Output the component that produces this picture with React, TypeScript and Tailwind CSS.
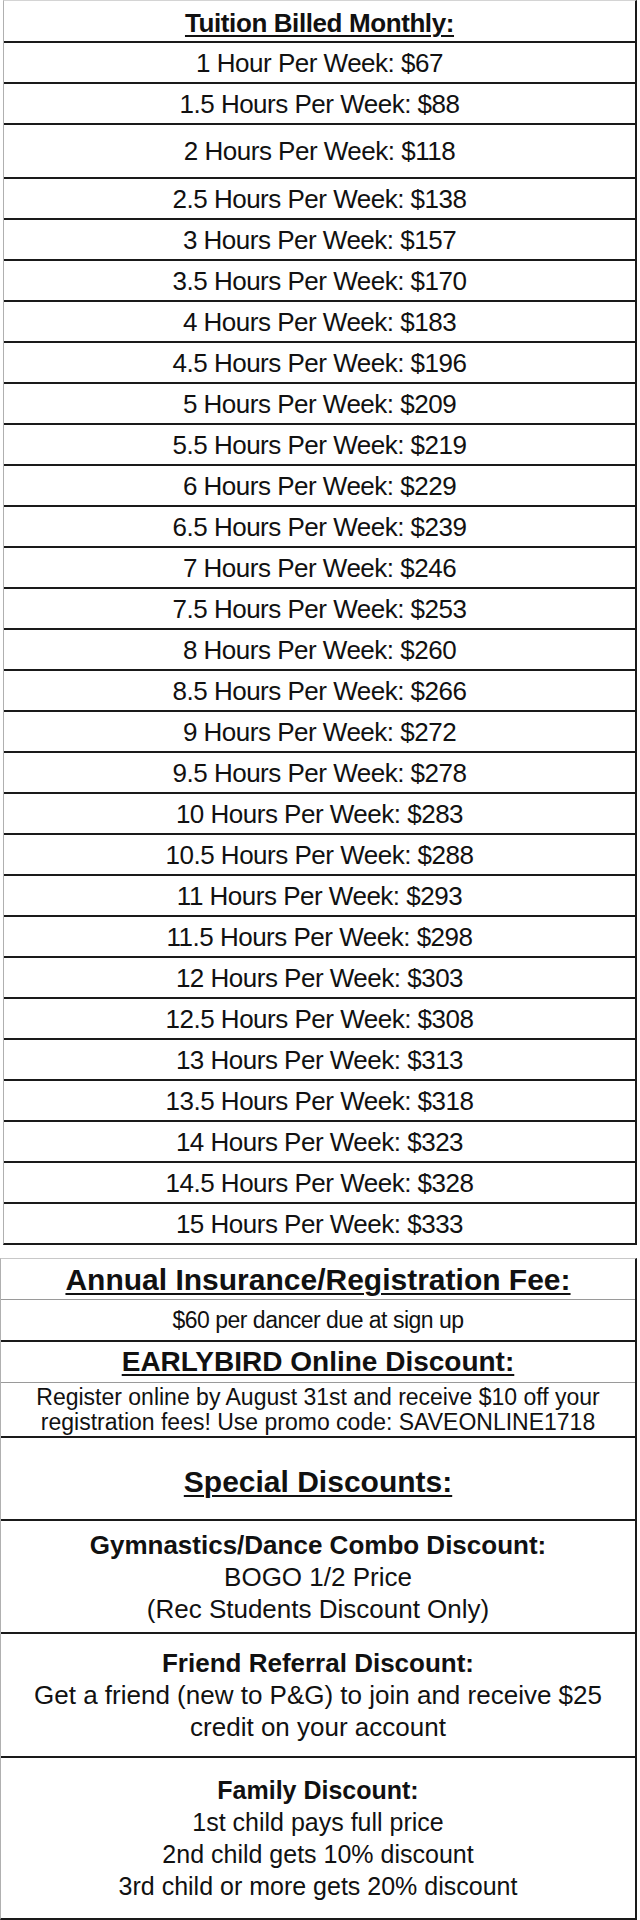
const rates: [string, number][] = [
  ['1 Hour', 67],
  ['1.5 Hours', 88],
  ['2 Hours', 118],
  ['2.5 Hours', 138],
  ['3 Hours', 157],
  ['3.5 Hours', 170],
  ['4 Hours', 183],
  ['4.5 Hours', 196],
  ['5 Hours', 209],
  ['5.5 Hours', 219],
  ['6 Hours', 229],
  ['6.5 Hours', 239],
  ['7 Hours', 246],
  ['7.5 Hours', 253],
  ['8 Hours', 260],
  ['8.5 Hours', 266],
  ['9 Hours', 272],
  ['9.5 Hours', 278],
  ['10 Hours', 283],
  ['10.5 Hours', 288],
  ['11 Hours', 293],
  ['11.5 Hours', 298],
  ['12 Hours', 303],
  ['12.5 Hours', 308],
  ['13 Hours', 313],
  ['13.5 Hours', 318],
  ['14 Hours', 323],
  ['14.5 Hours', 328],
  ['15 Hours', 333],
];

const underline = 'underline decoration-2 underline-offset-[3px]';

export default function App() {
  return (
    <div className="min-h-[1920px] w-[640px] bg-white text-[#111] font-['Liberation_Sans',Arial,sans-serif]">
      {/* monthly tuition table */}
      <div className="ml-[3px] w-[634px] border-t border-l border-r-2 border-b-2 border-t-[#d4d4d4] border-l-[#b0b0b0] border-r-[#1a1a1a] border-b-[#1a1a1a]">
        <div className="flex h-[40px] items-center justify-center pt-[4px]">
          <span className={`text-[26px] font-bold leading-none tracking-[-0.4px] ${underline}`}>Tuition Billed Monthly:</span>
        </div>
        {rates.map(([hours, price]) => (
          <div
            key={hours}
            className={`flex items-center justify-center border-t-2 border-[#1a1a1a] text-[26px] leading-none tracking-[-0.5px] ${
              hours === '2 Hours' ? 'h-[54px]' : 'h-[41px]'
            }`}
          >
            {hours} Per Week: ${price}
          </div>
        ))}
      </div>

      {/* fees and discounts */}
      <div className="mt-[13px] w-[637px] border-t border-l border-r-2 border-b-2 border-t-[#c8c8c8] border-l-[#b0b0b0] border-r-[#1a1a1a] border-b-[#1a1a1a]">
        <div className="flex h-[40px] items-center justify-center pt-[2px]">
          <span className={`text-[30px] font-bold leading-none ${underline}`}>Annual Insurance/Registration Fee:</span>
        </div>
        <div className="flex h-[41px] items-center justify-center border-t border-[#9a9a9a] text-[23px] leading-none tracking-[-0.5px]">
          $60 per dancer due at sign up
        </div>
        <div className="flex h-[42px] items-center justify-center border-t-2 border-[#1a1a1a]">
          <span className={`text-[28px] font-bold leading-none ${underline}`}>EARLYBIRD Online Discount:</span>
        </div>
        <div className="flex h-[54px] flex-col items-center justify-center border-t border-[#9a9a9a] text-[23px] leading-[25px]">
          <span>Register online by August 31st and receive $10 off your</span>
          <span>registration fees! Use promo code: SAVEONLINE1718</span>
        </div>
        <div className="flex h-[83px] items-center justify-center border-t-2 border-[#1a1a1a] pt-[6px]">
          <span className={`text-[30px] font-bold leading-none ${underline}`}>Special Discounts:</span>
        </div>
        <div className="flex h-[113px] flex-col items-center justify-center border-t-2 border-[#1a1a1a] text-[26px] leading-[32px]">
          <span className="font-bold">Gymnastics/Dance Combo Discount:</span>
          <span>BOGO 1/2 Price</span>
          <span>(Rec Students Discount Only)</span>
        </div>
        <div className="flex h-[124px] flex-col items-center justify-center border-t-2 border-[#1a1a1a] text-[26px] leading-[32px]">
          <span className="font-bold">Friend Referral Discount:</span>
          <span>Get a friend (new to P&amp;G) to join and receive $25</span>
          <span>credit on your account</span>
        </div>
        <div className="flex h-[162px] flex-col items-center justify-center border-t-2 border-[#1a1a1a] text-[25px] leading-[32px]">
          <span className="font-bold">Family Discount:</span>
          <span>1st child pays full price</span>
          <span>2nd child gets 10% discount</span>
          <span>3rd child or more gets 20% discount</span>
        </div>
      </div>
    </div>
  );
}
